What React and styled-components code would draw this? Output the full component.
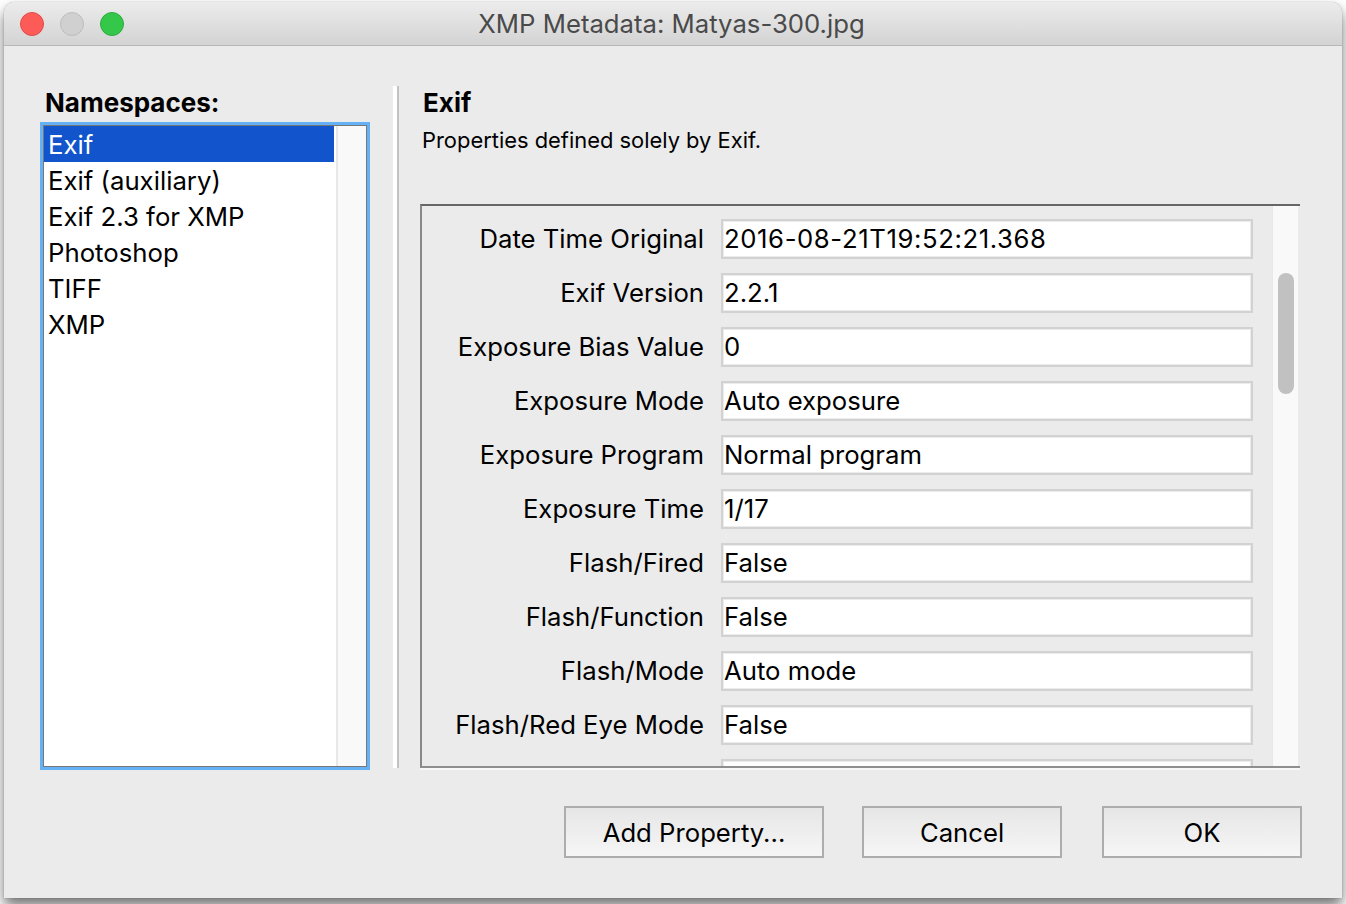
import styled, { createGlobalStyle } from "styled-components";

const GlobalStyle = createGlobalStyle`
  html, body {
    margin: 0;
    padding: 0;
  }
  body {
    font-family: Inter, "Noto Sans", "Liberation Sans", sans-serif;
    color: #000;
    overflow: hidden;
  }
  * {
    box-sizing: border-box;
  }
`;

const Page = styled.div`
  width: 1346px;
  height: 904px;
  padding: 2px 4px 6px;
  background-color: #fff;
  overflow: hidden;
`;
const Window = styled.div`
  width: 1338px;
  height: 896px;
  display: flex;
  flex-direction: column;
  background-color: #ebebeb;
  border-radius: 10px 10px 0 0;
  box-shadow: 0 8px 14px rgba(0, 0, 0, 0.55), 0 0 1px rgba(0, 0, 0, 0.45);
`;
const TitleBar = styled.div`
  position: relative;
  flex: none;
  height: 44px;
  display: flex;
  align-items: center;
  justify-content: center;
  border-radius: 10px 10px 0 0;
  background: linear-gradient(180deg, #ececec, #d3d3d3);
  border-bottom: 1px solid #b8b8b8;
`;
const Lights = styled.div`
  position: absolute;
  left: 16px;
  top: 10px;
  display: flex;
  gap: 16px;
`;
const Light = styled.span`
  width: 24px;
  height: 24px;
  border-radius: 50%;
  background-color: ${(p) => p.$fill};
  border: 1px solid ${(p) => p.$edge};
`;
const Title = styled.div`
  font-size: 25.7px;
  line-height: 46px;
  color: #4a4a4a;
  margin-left: -3px;
`;
const Content = styled.div`
  flex: 1;
  display: flex;
  flex-direction: column;
  padding: 41px 40px 0 36px;
`;
const Columns = styled.div`
  display: flex;
  height: 683px;
`;
const Sidebar = styled.div`
  width: 330px;
  flex: none;
`;
const SideLabel = styled.div`
  height: 36px;
  font-size: 26px;
  font-weight: 700;
  line-height: 32px;
  padding-left: 5px;
`;
const ListBox = styled.div`
  height: 648px;
  margin-top: -1px;
  display: flex;
  border: 3px solid #64b1f5;
  background-color: #fff;
  box-shadow: inset 0 0 0 1px #777;
  padding: 1px;
`;
const List = styled.div`
  flex: 1;
  min-width: 0;
`;
const ListItem = styled.div`
  height: 36px;
  margin-right: 2px;
  padding-left: 4px;
  font-size: 25.75px;
  line-height: 37px;
  color: ${(p) => (p.$selected ? "#fff" : "#000")};
  background-color: ${(p) => (p.$selected ? "#1254cc" : "transparent")};
`;
const ListGutter = styled.div`
  width: 30px;
  flex: none;
  background-color: #f9f9f9;
  border-left: 2px solid #e8e8e8;
`;
const Divider = styled.div`
  flex: none;
  width: 6px;
  height: 682px;
  margin: -1px 21px 0 23px;
  background-color: #fff;
  border-right: 2px solid #c2c2c2;
`;
const Main = styled.div`
  flex: 1;
  min-width: 0;
  display: flex;
  flex-direction: column;
`;
const Heading = styled.div`
  height: 36px;
  font-size: 26px;
  font-weight: 700;
  line-height: 32px;
  padding-left: 3px;
`;
const Subheading = styled.div`
  height: 38px;
  font-size: 21.9px;
  line-height: 34px;
  padding-left: 2px;
`;
const PropertyPanel = styled.div`
  height: 564px;
  margin-top: 43px;
  display: flex;
  overflow: hidden;
  border-style: solid;
  border-color: #666 transparent #8f8f8f #888;
  border-width: 2px 0 2px 2px;
  width: 880px;
  box-shadow: 0 2px 0 #f7f7f7;
`;
const Rows = styled.div`
  flex: 1;
  min-width: 0;
  padding-top: 13px;
  display: flex;
  flex-direction: column;
  gap: 14px;
`;
const Row = styled.div`
  flex: none;
  display: flex;
  height: 40px;
`;
const RowLabel = styled.div`
  width: 282px;
  flex: none;
  text-align: right;
  font-size: 25.7px;
  line-height: 40px;
`;
const RowField = styled.div`
  width: 532px;
  height: 40px;
  flex: none;
  margin-left: 17px;
  padding-left: 1px;
  font-size: 25.7px;
  letter-spacing: ${(p) => p.$tracking || 0}px;
  line-height: 36px;
  background-color: #fff;
  border: 2px solid #d2d2d2;
  box-shadow: inset 0 0 0 1px #ececec;
`;
const PanelGutter = styled.div`
  position: relative;
  flex: none;
  width: 26px;
  margin-right: 2px;
  background-color: #f9f9f9;
  border-left: 1px solid #e8e8e8;
`;
const Thumb = styled.div`
  position: absolute;
  left: 5px;
  top: 67px;
  width: 16px;
  height: 121px;
  border-radius: 8px;
  background-color: #c1c1c1;
`;
const ButtonBar = styled.div`
  display: flex;
  justify-content: flex-end;
  margin-top: 36px;
`;
const Button = styled.button`
  width: ${(p) => p.$width}px;
  height: 52px;
  margin-left: ${(p) => p.$gap}px;
  padding: 0;
  font-family: inherit;
  font-size: 25.7px;
  color: #000;
  background: linear-gradient(180deg, #e6e6e6, #f6f6f6);
  border: 2px solid #adadad;
  border-radius: 0;
`;

const namespaces = ["Exif", "Exif (auxiliary)", "Exif 2.3 for XMP", "Photoshop", "TIFF", "XMP"];

const properties = [
  ["Date Time Original", "2016-08-21T19:52:21.368", 0.6],
  ["Exif Version", "2.2.1"],
  ["Exposure Bias Value", "0"],
  ["Exposure Mode", "Auto exposure"],
  ["Exposure Program", "Normal program"],
  ["Exposure Time", "1/17"],
  ["Flash/Fired", "False"],
  ["Flash/Function", "False"],
  ["Flash/Mode", "Auto mode"],
  ["Flash/Red Eye Mode", "False"],
  ["", ""],
];

const App = () => {
  return (
    <Page>
      <GlobalStyle />
      <Window>
        <TitleBar>
          <Lights>
            <Light $fill="#fc5b57" $edge="#e24b47" />
            <Light $fill="#d0d0d0" $edge="#bdbdbd" />
            <Light $fill="#34c749" $edge="#2dac3e" />
          </Lights>
          <Title>XMP Metadata: Matyas-300.jpg</Title>
        </TitleBar>
        <Content>
          <Columns>
            <Sidebar>
              <SideLabel>Namespaces:</SideLabel>
              <ListBox>
                <List>
                  {namespaces.map((name, i) => (
                    <ListItem key={name} $selected={i === 0}>
                      {name}
                    </ListItem>
                  ))}
                </List>
                <ListGutter />
              </ListBox>
            </Sidebar>
            <Divider />
            <Main>
              <Heading>Exif</Heading>
              <Subheading>Properties defined solely by Exif.</Subheading>
              <PropertyPanel>
                <Rows>
                  {properties.map(([label, value, tracking], i) => (
                    <Row key={i}>
                      <RowLabel>{label}</RowLabel>
                      <RowField $tracking={tracking}>{value}</RowField>
                    </Row>
                  ))}
                </Rows>
                <PanelGutter>
                  <Thumb />
                </PanelGutter>
              </PropertyPanel>
            </Main>
          </Columns>
          <ButtonBar>
            <Button $width={260} $gap={0}>Add Property...</Button>
            <Button $width={200} $gap={38}>Cancel</Button>
            <Button $width={200} $gap={40}>OK</Button>
          </ButtonBar>
        </Content>
      </Window>
    </Page>
  );
};

export default App;
